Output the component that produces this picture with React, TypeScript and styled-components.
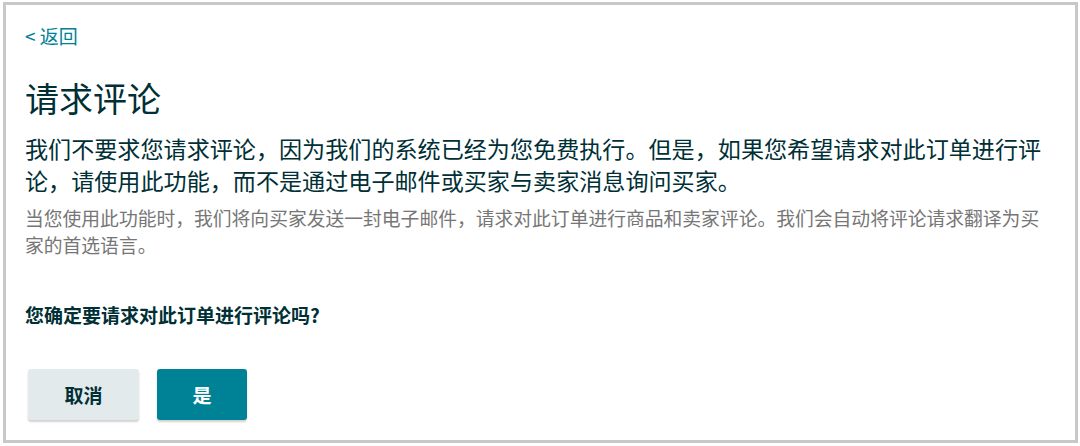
import React from 'react';
import styled, { createGlobalStyle } from 'styled-components';

const GlobalStyle = createGlobalStyle`
  html, body {
    margin: 0;
    padding: 0;
    background: #ffffff;
  }
  body {
    font-family: "Noto Sans CJK SC", "Noto Sans", Arial, sans-serif;
    color: #002f36;
  }
  * {
    box-sizing: border-box;
  }
`;

const Frame = styled.div`
  width: 1075px;
  height: 441px;
  margin: 2px 0 0 3px;
  border: 3px solid #c8c8c8;
  padding: 19px 0 0 19px;
  background: #ffffff;
`;

const Content = styled.div`
  width: 1020px;
  display: flex;
  flex-direction: column;
`;

const BackLink = styled.a`
  align-self: flex-start;
  font-size: 19px;
  line-height: 24px;
  color: #008296;
  text-decoration: none;
  cursor: pointer;
`;

const Title = styled.h1`
  margin: 28px 0 0;
  font-size: 34px;
  line-height: 44px;
  font-weight: 400;
  color: #002f36;
`;

const Lead = styled.p`
  margin: 12px 0 0;
  font-size: 23.1px;
  line-height: 32px;
  color: #002f36;
`;

const Note = styled.p`
  margin: 8px 0 0;
  font-size: 18.8px;
  line-height: 27px;
  color: #767676;
`;

const Question = styled.p`
  margin: 45px 0 0;
  font-size: 19px;
  line-height: 24px;
  font-weight: 700;
  color: #002f36;
`;

const Actions = styled.div`
  display: flex;
  gap: 18px;
  margin: 42px 0 0 3px;
`;

const Button = styled.button<{ $variant: 'primary' | 'secondary'; $width: number }>`
  width: ${p => p.$width}px;
  height: 51px;
  border: none;
  border-radius: 3px;
  font-family: inherit;
  font-size: 19px;
  font-weight: 700;
  cursor: pointer;
  box-shadow: 0 2px 2px rgba(0, 0, 0, 0.18);
  background: ${p => (p.$variant === 'primary' ? '#008296' : '#e3eaeb')};
  color: ${p => (p.$variant === 'primary' ? '#ffffff' : '#002f36')};
`;

export default function App() {
  return (
    <>
      <GlobalStyle />
      <Frame>
        <Content>
          <BackLink>&lt; 返回</BackLink>
          <Title>请求评论</Title>
          <Lead>
            我们不要求您请求评论，因为我们的系统已经为您免费执行。但是，如果您希望请求对此订单进行评论，请使用此功能，而不是通过电子邮件或买家与卖家消息询问买家。
          </Lead>
          <Note>
            当您使用此功能时，我们将向买家发送一封电子邮件，请求对此订单进行商品和卖家评论。我们会自动将评论请求翻译为买家的首选语言。
          </Note>
          <Question>您确定要请求对此订单进行评论吗?</Question>
          <Actions>
            <Button $variant="secondary" $width={111}>取消</Button>
            <Button $variant="primary" $width={90}>是</Button>
          </Actions>
        </Content>
      </Frame>
    </>
  );
}
